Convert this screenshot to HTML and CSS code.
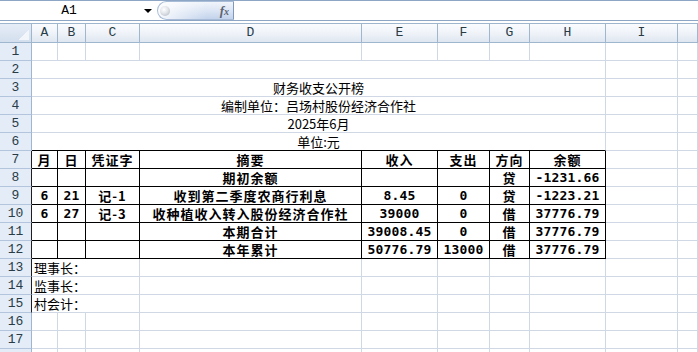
FILE: index.html
```html
<!DOCTYPE html>
<html lang="zh-CN">
<head>
<meta charset="utf-8">
<title>财务收支公开榜</title>
<link rel="stylesheet" href="styles.css">
</head>
<body>
<div class="fbar">
  <div class="namebox"><span class="ref">A1</span><span class="caret"></span></div>
  <div class="fxpill"><span class="knob"></span><span class="fx"><i>f</i><i class="fxx">x</i></span></div>
  <div class="finput"></div>
</div>
<div class="gap"></div>
<div class="sheet">
  <div class="corner"></div><div class="ch">A</div><div class="ch">B</div><div class="ch">C</div><div class="ch">D</div><div class="ch">E</div><div class="ch">F</div><div class="ch">G</div><div class="ch">H</div><div class="ch">I</div><div class="ch"></div>

  <div class="rh">1</div><div class="c"></div><div class="c"></div><div class="c"></div><div class="c"></div><div class="c"></div><div class="c"></div><div class="c"></div><div class="c"></div><div class="c"></div><div class="c"></div>

  <div class="rh">2</div><div class="c m8"></div><div class="c"></div><div class="c"></div>
  <div class="rh">3</div><div class="c m8">财务收支公开榜</div><div class="c"></div><div class="c"></div>
  <div class="rh">4</div><div class="c m8">编制单位：吕场村股份经济合作社</div><div class="c"></div><div class="c"></div>
  <div class="rh">5</div><div class="c m8">2025年6月</div><div class="c"></div><div class="c"></div>
  <div class="rh">6</div><div class="c m8 tb">单位:元</div><div class="c"></div><div class="c"></div>

  <div class="rh rk">7</div><div class="t">月</div><div class="t">日</div><div class="t">凭证字</div><div class="t">摘要</div><div class="t">收入</div><div class="t">支出</div><div class="t">方向</div><div class="t">余额</div><div class="c"></div><div class="c"></div>

  <div class="rh rk">8</div><div class="t"></div><div class="t"></div><div class="t"></div><div class="t">期初余额</div><div class="t"></div><div class="t"></div><div class="t">贷</div><div class="t n">-1231.66</div><div class="c"></div><div class="c"></div>

  <div class="rh rk">9</div><div class="t n">6</div><div class="t n">21</div><div class="t">记-1</div><div class="t">收到第二季度农商行利息</div><div class="t n">8.45</div><div class="t n">0</div><div class="t">贷</div><div class="t n">-1223.21</div><div class="c"></div><div class="c"></div>

  <div class="rh rk">10</div><div class="t n">6</div><div class="t n">27</div><div class="t">记-3</div><div class="t">收种植收入转入股份经济合作社</div><div class="t n">39000</div><div class="t n">0</div><div class="t">借</div><div class="t n">37776.79</div><div class="c"></div><div class="c"></div>

  <div class="rh rk">11</div><div class="t"></div><div class="t"></div><div class="t"></div><div class="t">本期合计</div><div class="t n">39008.45</div><div class="t n">0</div><div class="t">借</div><div class="t n">37776.79</div><div class="c"></div><div class="c"></div>

  <div class="rh rk">12</div><div class="t"></div><div class="t"></div><div class="t"></div><div class="t">本年累计</div><div class="t n">50776.79</div><div class="t n">13000</div><div class="t">借</div><div class="t n">37776.79</div><div class="c"></div><div class="c"></div>

  <div class="rh rk">13</div><div class="c m3">理事长：</div><div class="c"></div><div class="c"></div><div class="c"></div><div class="c"></div><div class="c"></div><div class="c"></div><div class="c"></div>
  <div class="rh rk">14</div><div class="c m3">监事长：</div><div class="c"></div><div class="c"></div><div class="c"></div><div class="c"></div><div class="c"></div><div class="c"></div><div class="c"></div>
  <div class="rh rk">15</div><div class="c m3">村会计：</div><div class="c"></div><div class="c"></div><div class="c"></div><div class="c"></div><div class="c"></div><div class="c"></div><div class="c"></div>

  <div class="rh">16</div><div class="c"></div><div class="c"></div><div class="c"></div><div class="c"></div><div class="c"></div><div class="c"></div><div class="c"></div><div class="c"></div><div class="c"></div><div class="c"></div>
  <div class="rh">17</div><div class="c"></div><div class="c"></div><div class="c"></div><div class="c"></div><div class="c"></div><div class="c"></div><div class="c"></div><div class="c"></div><div class="c"></div><div class="c"></div>
  <div class="rh"></div><div class="c"></div><div class="c"></div><div class="c"></div><div class="c"></div><div class="c"></div><div class="c"></div><div class="c"></div><div class="c"></div><div class="c"></div><div class="c"></div>
</div>
</body>
</html>
```

FILE: styles.css
```css
html, body {
  margin: 0;
  padding: 0;
  background: #ffffff;
  overflow: hidden;
  width: 698px;
  height: 352px;
}

.fbar {
  display: flex;
  height: 21px;
  box-sizing: border-box;
  border-top: 1px solid #8ea6c6;
  border-bottom: 1px solid #8ea6c6;
  background: #ffffff;
}

.namebox {
  width: 157px;
  display: flex;
  align-items: center;
}

.ref {
  width: 138px;
  text-align: center;
  font-family: "Liberation Mono", monospace;
  font-size: 13px;
  color: #000;
  line-height: 19px;
}

.caret {
  width: 0;
  height: 0;
  margin-left: 6px;
  border-left: 4px solid transparent;
  border-right: 4px solid transparent;
  border-top: 4px solid #000;
}

.fxpill {
  width: 77px;
  box-sizing: border-box;
  display: flex;
  align-items: center;
  justify-content: space-between;
  border: 1px solid #a8bcd8;
  border-right: 1px solid #7f98bc;
  border-radius: 10px 0 0 10px;
  background:
    linear-gradient(to right, rgba(255,255,255,0.85), rgba(255,255,255,0) 65%),
    linear-gradient(to bottom, #f1f5fb 0%, #dbe5f4 50%, #c3d3ec 100%);
  padding: 0 4px 0 2px;
}

.knob {
  width: 10px;
  height: 10px;
  border-radius: 50%;
  background: radial-gradient(circle at 40% 35%, #ffffff 0%, #e1e4e9 45%, #a9b1bd 100%);
}

.fx {
  font-family: "Liberation Serif", serif;
  font-weight: bold;
  font-size: 13px;
  color: #5d6470;
  line-height: 17px;
}

.fxx {
  font-size: 10px;
}

.finput {
  flex: 1;
  background: #ffffff;
}

.gap {
  height: 2px;
}

.sheet {
  display: grid;
  grid-template-columns: 32px 26px 28px 54px 222px 76px 52px 40px 76px 72px 1fr;
  grid-template-rows: 20px;
  grid-auto-rows: 18px;
}

.corner, .ch {
  box-sizing: border-box;
  border-top: 1px solid #9eb6ce;
  border-bottom: 1px solid #9eb6ce;
  border-right: 1px solid #9eb6ce;
}

.corner {
  background:
    linear-gradient(135deg, transparent 50%, #f2f6fb 50%) right 2px bottom 2px / 11px 11px no-repeat,
    linear-gradient(to bottom, #e6edf7, #d3dfee);
}

.ch {
  background: linear-gradient(to bottom, #fafcfe 0%, #eef2f8 55%, #dfe6f0 100%);
  font-family: "Liberation Mono", monospace;
  font-size: 13px;
  line-height: 18px;
  text-align: center;
  color: #283c48;
}

.rh {
  box-sizing: border-box;
  background: #e4ecf7;
  border-right: 1px solid #9eb6ce;
  border-bottom: 1px solid #b3c5dc;
  font-family: "Liberation Mono", monospace;
  font-size: 13px;
  line-height: 18px;
  text-align: center;
  color: #283c48;
}

.rk {
  border-right-color: #1e1e1e;
}

.c, .t {
  box-sizing: border-box;
  font-family: "Noto Sans CJK SC", sans-serif;
  font-size: 13px;
  line-height: 17px;
  white-space: nowrap;
  overflow: hidden;
  color: #000;
}

.c {
  border-right: 1px solid #d0d7e5;
  border-bottom: 1px solid #d0d7e5;
}

.m8 {
  grid-column: span 8;
  text-align: center;
}

.m3 {
  grid-column: span 3;
  padding-left: 2px;
}

.tb {
  border-bottom-color: #000;
}

.t {
  border-right: 1px solid #000;
  border-bottom: 1px solid #000;
  text-align: center;
  font-weight: bold;
  letter-spacing: 1px;
}

.t.n {
  font-family: "DejaVu Sans Mono", monospace;
  letter-spacing: 0.2px;
}
```
